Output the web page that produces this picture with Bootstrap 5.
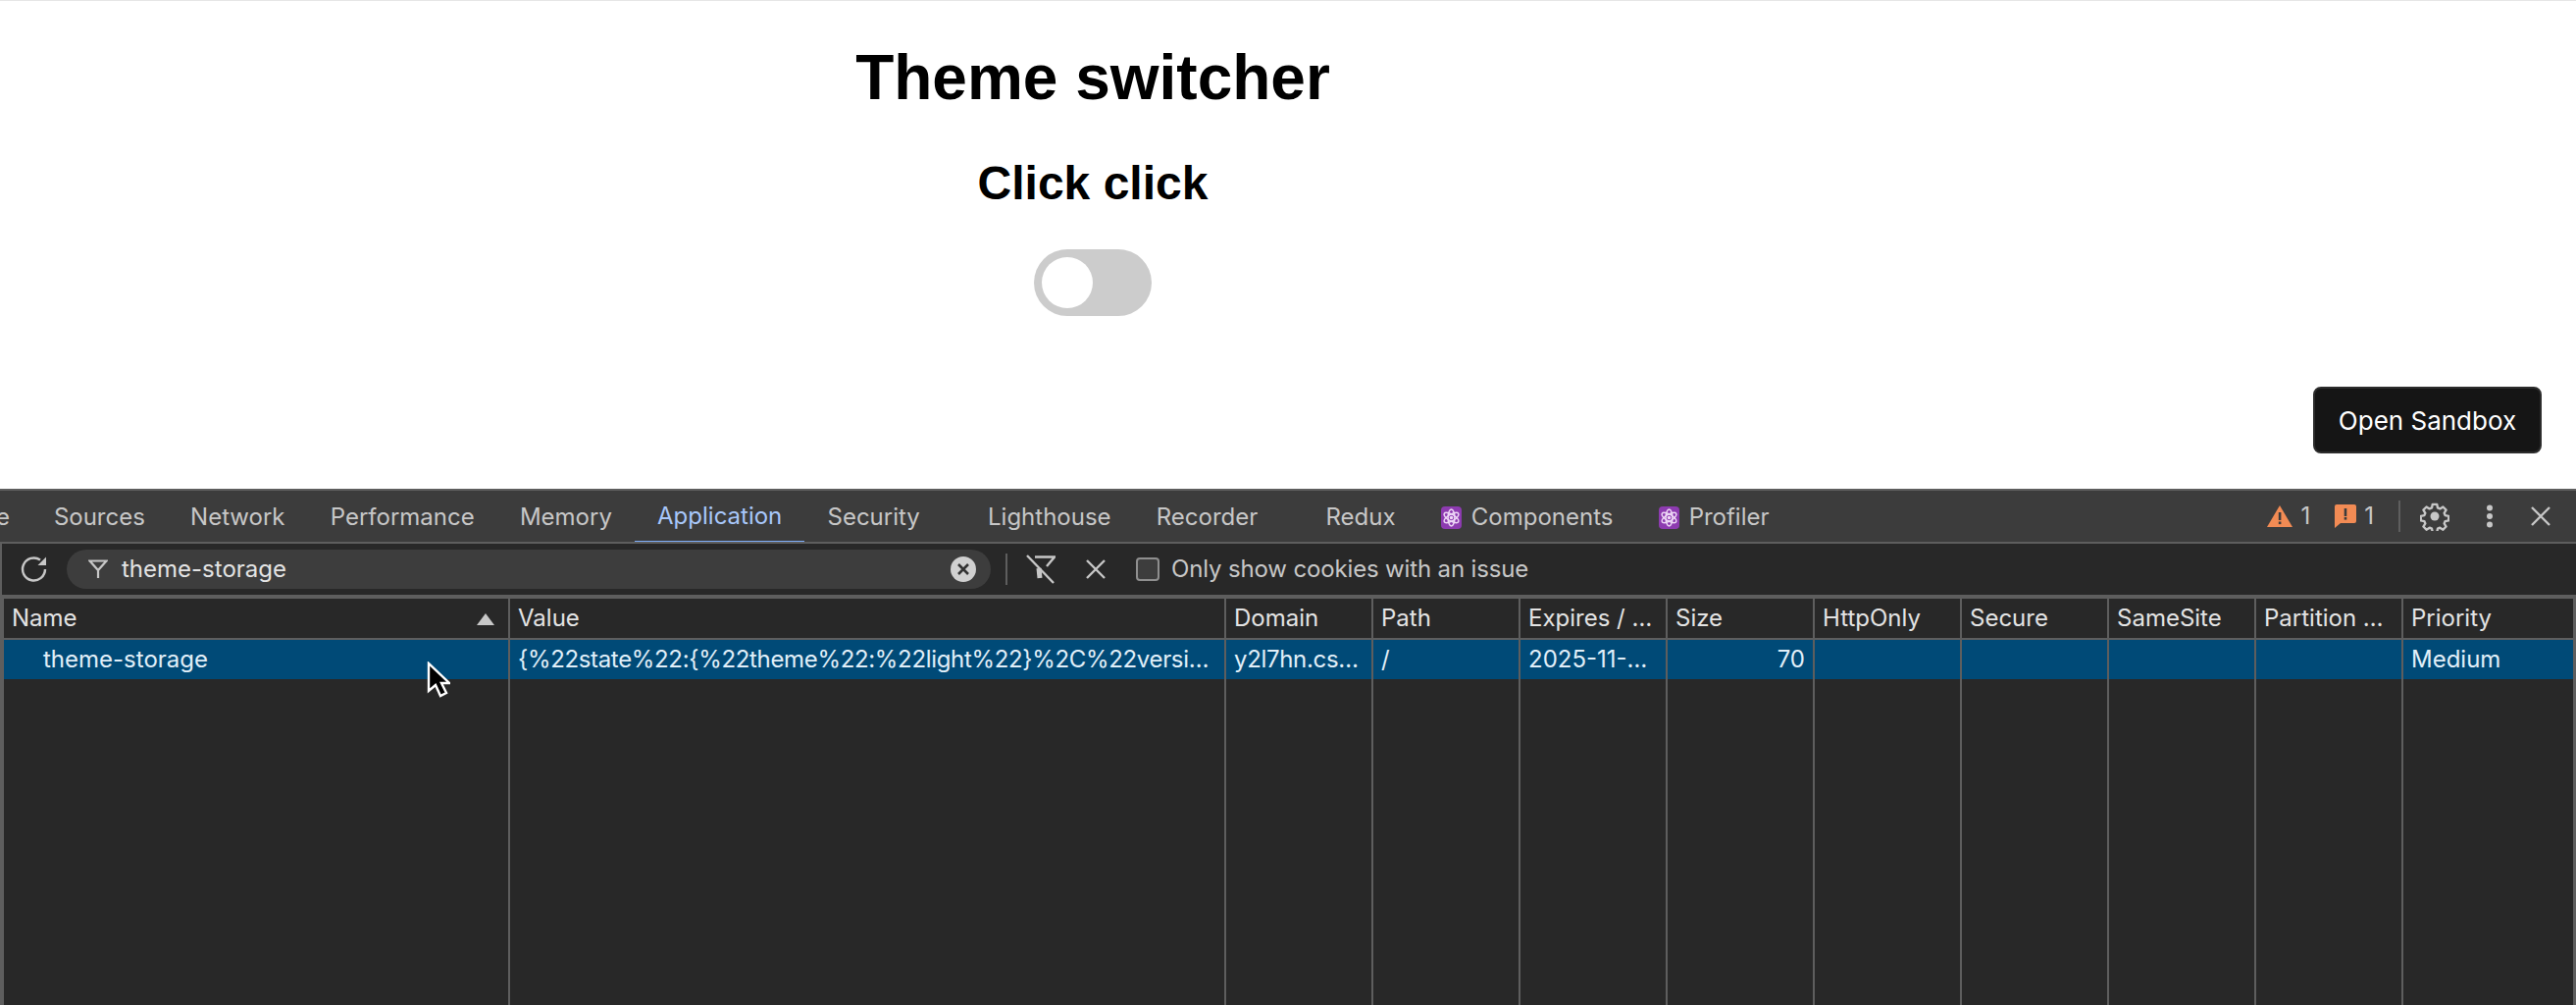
<!DOCTYPE html>
<html lang="en">
<head>
<meta charset="utf-8">
<title>Theme switcher</title>
<link href="https://cdn.jsdelivr.net/npm/bootstrap@5.3.0/dist/css/bootstrap.min.css" rel="stylesheet">
<style>
html,body{height:100%;overflow:hidden;background:#fff}
body{font-family:"Liberation Sans",Arial,sans-serif;color:#000}
.app-frame{height:1024px;width:2626px;position:relative;border-top:1px solid #e6e6e6}
.preview-pane{height:497px;width:2228px;text-align:center;padding-top:41px}
.preview-title{font-family:"Liberation Sans",Arial,sans-serif;font-weight:700;font-size:64px;line-height:74px;margin:0}
.preview-sub{font-family:"Liberation Sans",Arial,sans-serif;font-weight:700;font-size:48px;line-height:56px;margin:43px 0 0}
.toggle-track{display:block;width:120px;height:68px;border-radius:34px;background:#ccc;margin:39px auto 0;padding:8px}
.toggle-knob{display:block;width:52px;height:52px;border-radius:50%;background:#fff}
.sandbox-btn{position:absolute;left:2358px;top:393px;width:233px;height:68px;background:#151515;border:2px solid #2c2c2c;border-radius:8px;color:#fff;font-family:Inter,sans-serif;font-size:26px;padding:0;display:flex;align-items:center;justify-content:center}
.devtools{height:526px;background:#282828;font-family:Inter,sans-serif;font-size:24px;color:#e3e3e3;border-top:2px solid #5e5e5e}
.tabbar{height:54px;background:#3c3c3c;border-bottom:2px solid #5e5e5e;color:#c7c7c7;overflow:hidden}
.tab-item{height:54px;display:flex;align-items:center;padding:0 23.1px;white-space:nowrap;gap:10px;margin-bottom:-2px}
.tab-cut{width:10px;padding:0;overflow:hidden;justify-content:flex-end;margin-right:21.8px}
.tab-active{color:#a8c7fa;border-bottom:3px solid #7cacf8;padding-top:1px}
.tab-wide{margin-left:23px}
.tab-react{width:21px;height:23px;flex:none}
.tab-tools{color:#c7c7c7;padding-right:26px}
.count-item{display:flex;align-items:center;gap:8px}
.count-next{margin-left:25px}
.tool-sep{width:2px;height:32px;background:#5e5e5e}
.tools-sep-gap{margin-left:25px}
.gear-gap{margin-left:20px}
.dots-gap{margin-left:37px}
.close-gap{margin-left:38px}
.cookiebar{height:52px;border-left:2px solid #5e5e5e;padding-left:18px;color:#c7c7c7}
.filter-pill{height:40px;width:942px;margin-left:18px;border-radius:20px;background:#3d3d3d;color:#e3e3e3;padding:0 15px 0 22px}
.filter-text{margin-left:14px}
.bar-sep-gap{margin-left:15px}
.slash-gap{margin-left:19px}
.clear-gap{margin-left:31px}
.only-check{width:24px;height:24px;background:#3d3d3d;border:2px solid #8f8f8f;border-radius:4px;margin-left:31px;margin-right:12px}
.only-label{letter-spacing:-.15px}
.cookie-scroll{height:418px;border-top:4px solid #5e5e5e;border-left:2px solid #5e5e5e}
.cookie-table{table-layout:fixed;width:2624px;border-collapse:separate;border-spacing:0;height:414px;color:#e3e3e3;font-size:24px}
.cookie-table th,.cookie-table td{border-left:2px solid #5e5e5e;padding:0 8px;font-weight:400;white-space:nowrap;overflow:hidden}
.cookie-table thead th{height:42px;border-bottom:2px solid #5e5e5e;position:relative;background:#282828}
.cookie-table th:last-child,.cookie-table td:last-child{border-right:3px solid #5e5e5e}
.cookie-table .sel-row td{height:40px;background:#004a77;color:#e1eff9}
.cookie-table .sel-row .name-cell{padding-left:40px}
.cookie-table .sel-row .tight-cell{letter-spacing:-.33px}
.sort-mark{position:absolute;right:14px;top:15px}
.cursor-mark{position:absolute;left:435px;top:673px;width:24px;height:37px}
</style>
</head>
<body>
<div class="app-frame">
  <div class="preview-pane">
    <h1 class="preview-title">Theme switcher</h1>
    <h2 class="preview-sub">Click click</h2>
    <span class="toggle-track"><span class="toggle-knob"></span></span>
  </div>
  <button type="button" class="sandbox-btn">Open Sandbox</button>
  <div class="devtools">
    <div class="tabbar d-flex align-items-center">
      <div class="tab-item tab-cut">e</div>
      <div class="tab-item">Sources</div>
      <div class="tab-item">Network</div>
      <div class="tab-item">Performance</div>
      <div class="tab-item">Memory</div>
      <div class="tab-item tab-active">Application</div>
      <div class="tab-item">Security</div>
      <div class="tab-item tab-wide">Lighthouse</div>
      <div class="tab-item">Recorder</div>
      <div class="tab-item tab-wide">Redux</div>
      <div class="tab-item">
        <svg class="tab-react" viewBox="0 0 21 23"><rect width="21" height="23" rx="4" fill="#8d3bb0"/><g fill="none" stroke="#efd9f7" stroke-width="1.5"><ellipse cx="10.5" cy="11.5" rx="8.4" ry="3.4" transform="rotate(90 10.5 11.5)"/><ellipse cx="10.5" cy="11.5" rx="8.4" ry="3.4" transform="rotate(30 10.5 11.5)"/><ellipse cx="10.5" cy="11.5" rx="8.4" ry="3.4" transform="rotate(150 10.5 11.5)"/></g><circle cx="10.5" cy="11.5" r="1.8" fill="#efd9f7"/></svg>
        Components</div>
      <div class="tab-item">
        <svg class="tab-react" viewBox="0 0 21 23"><rect width="21" height="23" rx="4" fill="#8d3bb0"/><g fill="none" stroke="#efd9f7" stroke-width="1.5"><ellipse cx="10.5" cy="11.5" rx="8.4" ry="3.4" transform="rotate(90 10.5 11.5)"/><ellipse cx="10.5" cy="11.5" rx="8.4" ry="3.4" transform="rotate(30 10.5 11.5)"/><ellipse cx="10.5" cy="11.5" rx="8.4" ry="3.4" transform="rotate(150 10.5 11.5)"/></g><circle cx="10.5" cy="11.5" r="1.8" fill="#efd9f7"/></svg>
        Profiler</div>
      <div class="tab-tools ms-auto d-flex align-items-center">
        <span class="count-item"><svg width="26" height="22" viewBox="0 0 26 22"><path d="M13 0 26 22H0Z" fill="#f28b54"/><rect x="11.8" y="7" width="2.6" height="8" fill="#3c3c3c"/><rect x="11.8" y="16.5" width="2.6" height="2.6" fill="#3c3c3c"/></svg>1</span>
        <span class="count-item count-next"><svg width="22" height="24" viewBox="0 0 22 24"><path d="M2 0H20A2 2 0 0 1 22 2V17A2 2 0 0 1 20 19H6L0 24V2A2 2 0 0 1 2 0Z" fill="#f28b54"/><rect x="9.7" y="4" width="2.6" height="8" fill="#3c3c3c"/><rect x="9.7" y="13" width="2.6" height="2.6" fill="#3c3c3c"/></svg>1</span>
        <span class="tool-sep tools-sep-gap"></span>
        <svg class="gear-gap" width="30" height="30" viewBox="0 0 30 30" fill="none" stroke="#c7c7c7" stroke-width="2.6" stroke-linejoin="round"><path d="M12.5 1.5h5l.8 4 2.6 1.1 3.5-2.2 3.5 3.5-2.2 3.5 1.1 2.6 4 .8v5l-4 .8-1.1 2.6 2.2 3.5-3.5 3.5-3.5-2.2-2.6 1.1-.8 4h-5l-.8-4-2.6-1.1-3.5 2.2-3.5-3.5 2.2-3.5-1.1-2.6-4-.8v-5l4-.8 1.1-2.6-2.2-3.5 3.5-3.5 3.5 2.2 2.6-1.1z" transform="translate(1.5 1.5) scale(.9)"/><circle cx="15" cy="15" r="4.5" fill="#c7c7c7" stroke="none"/></svg>
        <svg class="dots-gap" width="8" height="24" viewBox="0 0 8 24" fill="#c7c7c7"><circle cx="4" cy="3.5" r="3"/><circle cx="4" cy="12" r="3"/><circle cx="4" cy="20.5" r="3"/></svg>
        <svg class="close-gap" width="20" height="20" viewBox="0 0 20 20" stroke="#c7c7c7" stroke-width="2.4" fill="none"><path d="M1 1 19 19M19 1 1 19"/></svg>
      </div>
    </div>
    <div class="cookiebar d-flex align-items-center">
      <svg width="30" height="30" viewBox="0 0 30 30" fill="none" stroke="#c7c7c7" stroke-width="2.4"><path d="M26 15A11.5 11.5 0 1 1 21 5.5"/><path d="M27 2.5V11H18.5Z" fill="#c7c7c7" stroke="none"/></svg>
      <div class="filter-pill d-flex align-items-center">
        <svg width="20" height="20" viewBox="0 0 20 20" fill="none" stroke="#c7c7c7" stroke-width="2.2"><path d="M1.5 1.5H18.5L10 11ZM10 10.5V19"/></svg>
        <span class="filter-text">theme-storage</span>
        <svg class="ms-auto" width="26" height="26" viewBox="0 0 26 26"><circle cx="13" cy="13" r="13" fill="#d0d0d0"/><path d="M8 8 18 18M18 8 8 18" stroke="#333" stroke-width="2.6"/></svg>
      </div>
      <span class="tool-sep bar-sep-gap"></span>
      <svg class="slash-gap" width="30" height="30" viewBox="0 0 30 30" fill="none" stroke="#c7c7c7" stroke-width="2.4"><path d="M1 1 28 29"/><path d="M9 2.5H29L21 12" /><path d="M13 14 14 24" stroke-width="5"/></svg>
      <svg class="clear-gap" width="20" height="20" viewBox="0 0 20 20" stroke="#c7c7c7" stroke-width="2.4" fill="none"><path d="M1 1 19 19M19 1 1 19"/></svg>
      <span class="only-check"></span>
      <span class="only-label">Only show cookies with an issue</span>
    </div>
    <div class="cookie-scroll">
      <table class="cookie-table">
        <colgroup><col style="width:516px"><col style="width:730px"><col style="width:150px"><col style="width:150px"><col style="width:150px"><col style="width:150px"><col style="width:150px"><col style="width:150px"><col style="width:150px"><col style="width:150px"><col style="width:178px"></colgroup>
        <thead>
          <tr><th>Name<svg class="sort-mark" width="18" height="12" viewBox="0 0 18 12"><path d="M9 0 18 12H0Z" fill="#c7c7c7"/></svg></th><th>Value</th><th>Domain</th><th>Path</th><th>Expires / …</th><th>Size</th><th>HttpOnly</th><th>Secure</th><th>SameSite</th><th>Partition …</th><th>Priority</th></tr>
        </thead>
        <tbody>
          <tr class="sel-row"><td class="name-cell">theme-storage</td><td class="tight-cell">{%22state%22:{%22theme%22:%22light%22}%2C%22versi…</td><td class="tight-cell">y2l7hn.cs…</td><td>/</td><td>2025-11-…</td><td class="text-end">70</td><td></td><td></td><td></td><td></td><td>Medium</td></tr>
          <tr><td></td><td></td><td></td><td></td><td></td><td></td><td></td><td></td><td></td><td></td><td></td></tr>
        </tbody>
      </table>
    </div>
  </div>
  <svg class="cursor-mark" viewBox="0 0 24 37"><path d="M2 2V30L9 24 14 35 20 32 15 22H23Z" fill="#000" stroke="#fff" stroke-width="2.4"/></svg>
</div>
<script src="https://cdn.jsdelivr.net/npm/bootstrap@5.3.0/dist/js/bootstrap.bundle.min.js"></script>
</body>
</html>
